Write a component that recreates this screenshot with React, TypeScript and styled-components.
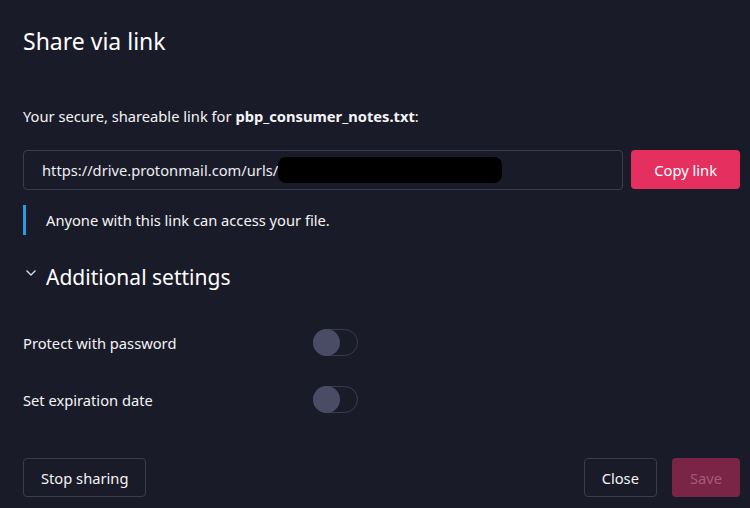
import styled, { createGlobalStyle } from "styled-components";

const GlobalStyle = createGlobalStyle`
  html, body {
    margin: 0;
    padding: 0;
    background: #1a1b28;
  }
  body {
    font-family: "Noto Sans", "Open Sans", sans-serif;
    color: #f4f4f6;
  }
`;

const settings = [
  { id: "password", label: "Protect with password" },
  { id: "expiration", label: "Set expiration date" },
];

export default function App() {
  return (
    <>
      <GlobalStyle />
      <Dialog>
        <Title>Share via link</Title>
        <Intro>
          Your secure, shareable link for <b>pbp_consumer_notes.txt</b>:
        </Intro>
        <LinkRow>
          <LinkField>
            https://drive.protonmail.com/urls/
            <Redacted />
          </LinkField>
          <PrimaryButton>Copy link</PrimaryButton>
        </LinkRow>
        <Notice>Anyone with this link can access your file.</Notice>
        <SectionToggle>
          <svg width="12" height="8" viewBox="0 0 12 8" fill="none">
            <path d="M1.5 1.5 L6 6 L10.5 1.5" stroke="#d8d8e0" strokeWidth="1.4" />
          </svg>
          <SectionTitle>Additional settings</SectionTitle>
        </SectionToggle>
        <Settings>
          {settings.map((s) => (
            <SettingRow key={s.id}>
              <SettingLabel>{s.label}</SettingLabel>
              <Switch />
            </SettingRow>
          ))}
        </Settings>
        <Footer>
          <GhostButton>Stop sharing</GhostButton>
          <FooterRight>
            <GhostButton>Close</GhostButton>
            <PrimaryButton disabled>Save</PrimaryButton>
          </FooterRight>
        </Footer>
      </Dialog>
    </>
  );
}

const Dialog = styled.div`
  box-sizing: border-box;
  width: 750px;
  height: 508px;
  padding: 26px 10px 0 23px;
  display: flex;
  flex-direction: column;
`;

const Title = styled.h1`
  margin: 0;
  font-size: 23px;
  font-weight: 400;
  line-height: 30px;
  color: #ffffff;
`;

const Intro = styled.p`
  margin: 49px 0 0;
  font-size: 14.7px;
  line-height: 22px;
  b {
    font-weight: 700;
  }
`;

const LinkRow = styled.div`
  display: flex;
  gap: 8px;
  margin-top: 23px;
`;

const LinkField = styled.div`
  flex: 1;
  box-sizing: border-box;
  height: 40px;
  border: 1px solid #3b3c50;
  border-radius: 4px;
  padding: 0 18px;
  display: flex;
  align-items: center;
  font-size: 14.7px;
  color: #eceef2;
`;

const Redacted = styled.span`
  display: inline-block;
  width: 224px;
  height: 26px;
  background: #000;
  border-radius: 8px;
`;

const PrimaryButton = styled.button`
  box-sizing: border-box;
  height: 39px;
  padding: 0 ${(p) => (p.disabled ? "18px" : "23px")};
  border: none;
  border-radius: 4px;
  background: ${(p) => (p.disabled ? "#7a2546" : "#e5305f")};
  color: ${(p) => (p.disabled ? "#a75a78" : "#ffffff")};
  font-family: inherit;
  font-size: 14.7px;
`;

const Notice = styled.div`
  margin-top: 15px;
  height: 30px;
  border-left: 3px solid #2a9de0;
  padding-left: 20px;
  display: flex;
  align-items: center;
  font-size: 14.7px;
`;

const SectionToggle = styled.div`
  display: flex;
  align-items: flex-start;
  gap: 9px;
  margin-top: 27px;
  padding-left: 2px;
  svg {
    margin-top: 7px;
  }
`;

const SectionTitle = styled.h2`
  margin: 0;
  font-size: 21px;
  font-weight: 400;
  line-height: 30px;
  color: #ffffff;
`;

const Settings = styled.div`
  display: flex;
  flex-direction: column;
  gap: 30px;
  margin-top: 37px;
`;

const SettingRow = styled.div`
  display: grid;
  grid-template-columns: 290px auto;
  align-items: center;
  height: 27px;
`;

const SettingLabel = styled.span`
  font-size: 14.7px;
`;

const Switch = styled.span`
  position: relative;
  box-sizing: border-box;
  width: 45px;
  height: 27px;
  border: 1px solid #3b3c50;
  border-radius: 14px;
  &::before {
    content: "";
    position: absolute;
    left: -1px;
    top: -1px;
    width: 27px;
    height: 27px;
    border-radius: 50%;
    background: #4a4c66;
  }
`;

const Footer = styled.div`
  display: flex;
  justify-content: space-between;
  margin-top: 45px;
`;

const FooterRight = styled.div`
  display: flex;
  gap: 15px;
`;

const GhostButton = styled.button`
  box-sizing: border-box;
  height: 39px;
  padding: 0 17px;
  border: 1px solid #3b3c50;
  border-radius: 4px;
  background: transparent;
  color: #f4f4f6;
  font-family: inherit;
  font-size: 14.7px;
`;
